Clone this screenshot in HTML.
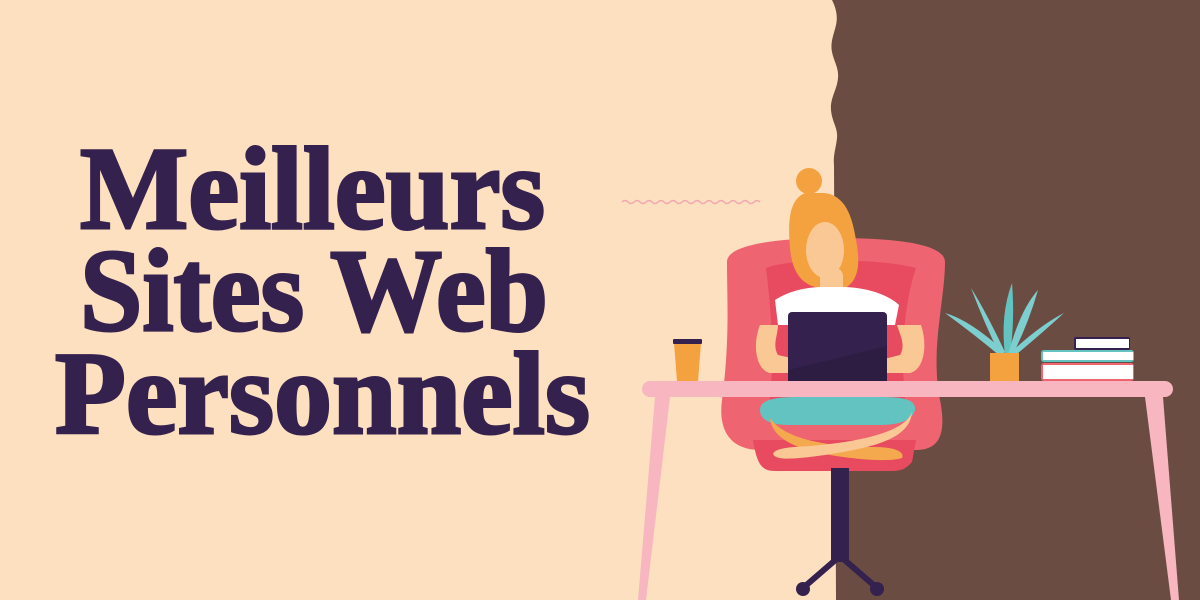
<!DOCTYPE html>
<html><head><meta charset="utf-8"><style>
html,body{margin:0;padding:0;width:1200px;height:600px;overflow:hidden;background:#fde0c0}
svg{display:block}
</style></head><body>
<svg width="1200" height="600" viewBox="0 0 1200 600" xmlns="http://www.w3.org/2000/svg">
<rect width="1200" height="600" fill="#fde0c0"/>
<path d="M832 0 C836 8 838 16 836 25 C834 34 830 42 832 52 C834 62 839 68 838 78 C837 90 830 98 831 110 C832 122 838 128 837 138 C836 148 833 155 834 165 L836 600 L1200 600 L1200 0 Z" fill="#6b4c42"/>
<text font-family="Liberation Serif, serif" font-weight="bold" font-size="118" fill="#34214e" stroke="#34214e" stroke-width="3">
<tspan x="80" y="228" textLength="465" lengthAdjust="spacingAndGlyphs">Meilleurs</tspan>
<tspan x="80" y="330" textLength="468" lengthAdjust="spacingAndGlyphs">Sites Web</tspan>
<tspan x="55" y="433" textLength="535" lengthAdjust="spacingAndGlyphs">Personnels</tspan>
</text>
<path d="M622 202 q3 -3 6 0 t6 0 t6 0 t6 0 t6 0 t6 0 t6 0 t6 0 t6 0 t6 0 t6 0 t6 0 t6 0 t6 0 t6 0 t6 0 t6 0 t6 0 t6 0 t6 0 t6 0 t6 0 t6 0" fill="none" stroke="#f2a6b0" stroke-width="1.3"/>
<!-- chair back -->
<path d="M727 262 C727 242 790 238 836 238 C885 238 945 242 945 262 C945 300 930 350 940 400 C948 440 935 450 916 450 L760 450 C730 450 718 430 722 400 C730 340 727 300 727 262 Z" fill="#ee6470"/>
<path d="M766 268 C790 258 880 258 916 268 C905 300 900 350 905 400 L770 400 C775 350 770 300 766 268 Z" fill="#e84a5f"/>
<path d="M753 440 L916 440 L912 462 C905 470 900 471 890 471 L775 471 C762 471 757 465 753 440 Z" fill="#e84a5f"/>
<!-- chair stem -->
<rect x="831" y="468" width="18" height="94" fill="#34214e"/>
<path d="M840 556 L803 588 M840 556 L877 588" stroke="#34214e" stroke-width="6"/>
<circle cx="803" cy="589" r="7" fill="#34214e"/><circle cx="877" cy="589" r="7" fill="#34214e"/>
<!-- hair -->
<circle cx="809" cy="181" r="13" fill="#f4a240"/>
<path d="M805 193 C788 200 788 225 790 248 C792 270 800 285 820 288 L845 288 C860 280 860 260 856 240 C852 215 845 196 825 193 Z" fill="#f4a240"/>
<ellipse cx="825" cy="250" rx="19" ry="28" fill="#f9c894"/>
<rect x="820" y="268" width="23" height="38" rx="8" fill="#f9c894"/>
<!-- shirt -->
<path d="M775 300 C790 290 810 287 822 287 L842 287 C860 287 885 292 899 305 L895 325 L778 325 Z" fill="#fff"/>
<!-- arms -->
<path d="M760 325 C752 345 756 370 770 373 L800 373 L800 360 L778 355 C772 345 778 335 778 325 Z" fill="#f9c894"/>
<path d="M921 325 C928 345 924 370 910 373 L880 373 L880 360 L900 355 C906 345 900 335 897 325 Z" fill="#f9c894"/>
<!-- shorts -->
<path d="M760 410 C760 398 780 397 800 397 L880 397 C905 397 916 400 915 410 C912 422 895 425 880 425 L790 425 C770 425 760 420 760 410 Z" fill="#63c3c0"/>
<!-- legs -->
<path d="M770 418 C785 440 830 447 875 447 C895 447 905 452 902 458 C890 462 860 460 830 455 C795 449 772 438 770 418 Z" fill="#f4a94e"/>
<path d="M912 412 C905 432 860 442 810 446 C790 447 775 448 773 454 C776 461 795 459 825 455 C870 448 910 440 912 412 Z" fill="#f9c894"/>
<!-- laptop -->
<rect x="788" y="312" width="99" height="70" rx="4" fill="#34214e"/>
<path d="M788 382 L788 370 L887 346 L887 382 Z" fill="#2d1d42"/>
<!-- cup -->
<path d="M674 343 L701 343 L698 381 L677 381 Z" fill="#f4a240"/>
<rect x="673" y="339" width="29" height="5" rx="1" fill="#34214e"/>
<!-- plant -->
<g fill="#7dcfcf">
<path d="M1005 352 Q970 320 945 313 Q975 335 1000 356 Z"/>
<path d="M1005 352 Q985 310 971 288 Q985 325 1000 355 Z"/>
<path d="M1005 355 Q1000 315 1012 283 Q1015 320 1010 355 Z" fill="#63c3c0"/>
<path d="M1008 355 Q1020 310 1038 290 Q1028 325 1012 356 Z"/>
<path d="M1008 355 Q1040 325 1064 313 Q1040 335 1012 358 Z"/>
</g>
<path d="M990 353 L1019 353 L1019 381 L990 381 Z" fill="#f4a240"/>
<!-- books -->
<rect x="1074" y="337" width="56" height="13" rx="2" fill="#34214e"/><rect x="1076" y="339" width="53" height="9" fill="#fff"/>
<rect x="1041" y="350" width="93" height="12" rx="3" fill="#63c3c0"/><rect x="1043" y="352" width="90" height="8" fill="#fff"/>
<rect x="1041" y="363" width="93" height="18" rx="3" fill="#ee6470"/><rect x="1043" y="365" width="90" height="14" fill="#fff"/>
<!-- desk -->
<rect x="642" y="381" width="531" height="16" rx="8" fill="#f7b6c0"/>
<path d="M655 397 L670 397 L646 600 L638 600 Z" fill="#f7b6c0"/>
<path d="M1145 397 L1163 397 L1179 600 L1171 600 Z" fill="#f7b6c0"/>
</svg>
</body></html>
